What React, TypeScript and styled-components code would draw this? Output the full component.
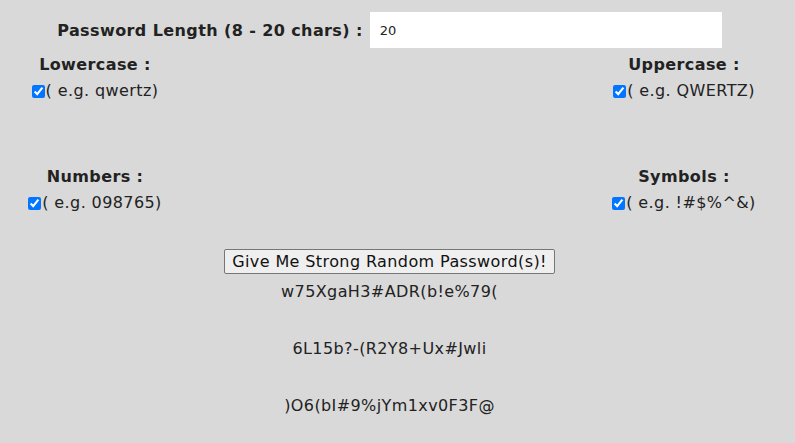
import * as React from "react";
import styled, {createGlobalStyle} from "styled-components";

const GlobalStyle = createGlobalStyle`
  html, body {
    margin: 0;
    padding: 0;
    background: #d9d9d9;
  }
`;

interface OptionType {
    title: string;
    example: string;
}

const options: OptionType[] = [
    {title: "Lowercase :", example: "( e.g. qwertz)"},
    {title: "Uppercase :", example: "( e.g. QWERTZ)"},
    {title: "Numbers :", example: "( e.g. 098765)"},
    {title: "Symbols :", example: "( e.g. !#$%^&)"},
];

const passwords = [
    "w75XgaH3#ADR(b!e%79(",
    "6L15b?-(R2Y8+Ux#Jwli",
    ")O6(bI#9%jYm1xv0F3F@",
];

const App = () => {
    return (
        <Page>
            <GlobalStyle/>
            <LengthRow>
                <LengthLabel>Password Length (8 - 20 chars) :</LengthLabel>
                <LengthInput type="text" defaultValue="20"/>
            </LengthRow>
            <OptionsGrid>
                {options.map((value, index) => (
                    <Option key={index}>
                        <OptionTitle>{value.title}</OptionTitle>
                        <CheckLine>
                            <CheckBox type="checkbox" defaultChecked/>
                            {value.example}
                        </CheckLine>
                    </Option>
                ))}
            </OptionsGrid>
            <Actions>
                <GenerateButton>Give Me Strong Random Password(s)!</GenerateButton>
                <PasswordList>
                    {passwords.map((value, index) => (
                        <PasswordItem key={index}>{value}</PasswordItem>
                    ))}
                </PasswordList>
            </Actions>
        </Page>
    );
};

export default App;

const Page = styled.div`
  min-height: 100vh;
  box-sizing: border-box;
  padding-right: 16px;
  background: #d9d9d9;
  color: #222;
  font-family: "DejaVu Sans", Verdana, sans-serif;
  font-size: 16px;
  letter-spacing: 0.4px;
`;

const LengthRow = styled.div`
  display: flex;
  justify-content: center;
  align-items: center;
  padding-top: 12px;
`;

const LengthLabel = styled.label`
  font-weight: bold;
  font-size: 16px;
  margin-right: 7px;
`;

const LengthInput = styled.input`
  width: 352px;
  height: 36px;
  box-sizing: border-box;
  border: none;
  outline: none;
  background: white;
  padding: 0 10px;
  font-family: "DejaVu Sans", sans-serif;
  font-size: 13px;
  color: #222;
`;

const OptionsGrid = styled.div`
  display: grid;
  grid-template-columns: 190px 190px;
  justify-content: space-between;
  row-gap: 65px;
  padding-top: 6px;
`;

const Option = styled.div`
  display: flex;
  flex-direction: column;
  align-items: center;
`;

const OptionTitle = styled.div`
  font-weight: bold;
  font-size: 16px;
  line-height: 22px;
  margin-bottom: 5px;
`;

const CheckLine = styled.label`
  display: flex;
  align-items: center;
  white-space: nowrap;
  font-size: 16px;
  line-height: 20px;
`;

const CheckBox = styled.input`
  width: 13px;
  height: 13px;
  margin: 0 1px 0 0;
  accent-color: #0075ff;
`;

const Actions = styled.div`
  display: flex;
  flex-direction: column;
  align-items: center;
  padding-top: 36px;
`;

const GenerateButton = styled.button`
  font-family: "DejaVu Sans", sans-serif;
  font-size: 16px;
  letter-spacing: 0.4px;
  color: #111;
  background: #efefef;
  border: 1px solid #767676;
  border-radius: 2px;
  padding: 2px 7px;
  height: 25px;
`;

const PasswordList = styled.div`
  display: flex;
  flex-direction: column;
  align-items: center;
  gap: 37px;
  padding-top: 8px;
`;

const PasswordItem = styled.div`
  font-size: 16px;
  line-height: 20px;
`;
